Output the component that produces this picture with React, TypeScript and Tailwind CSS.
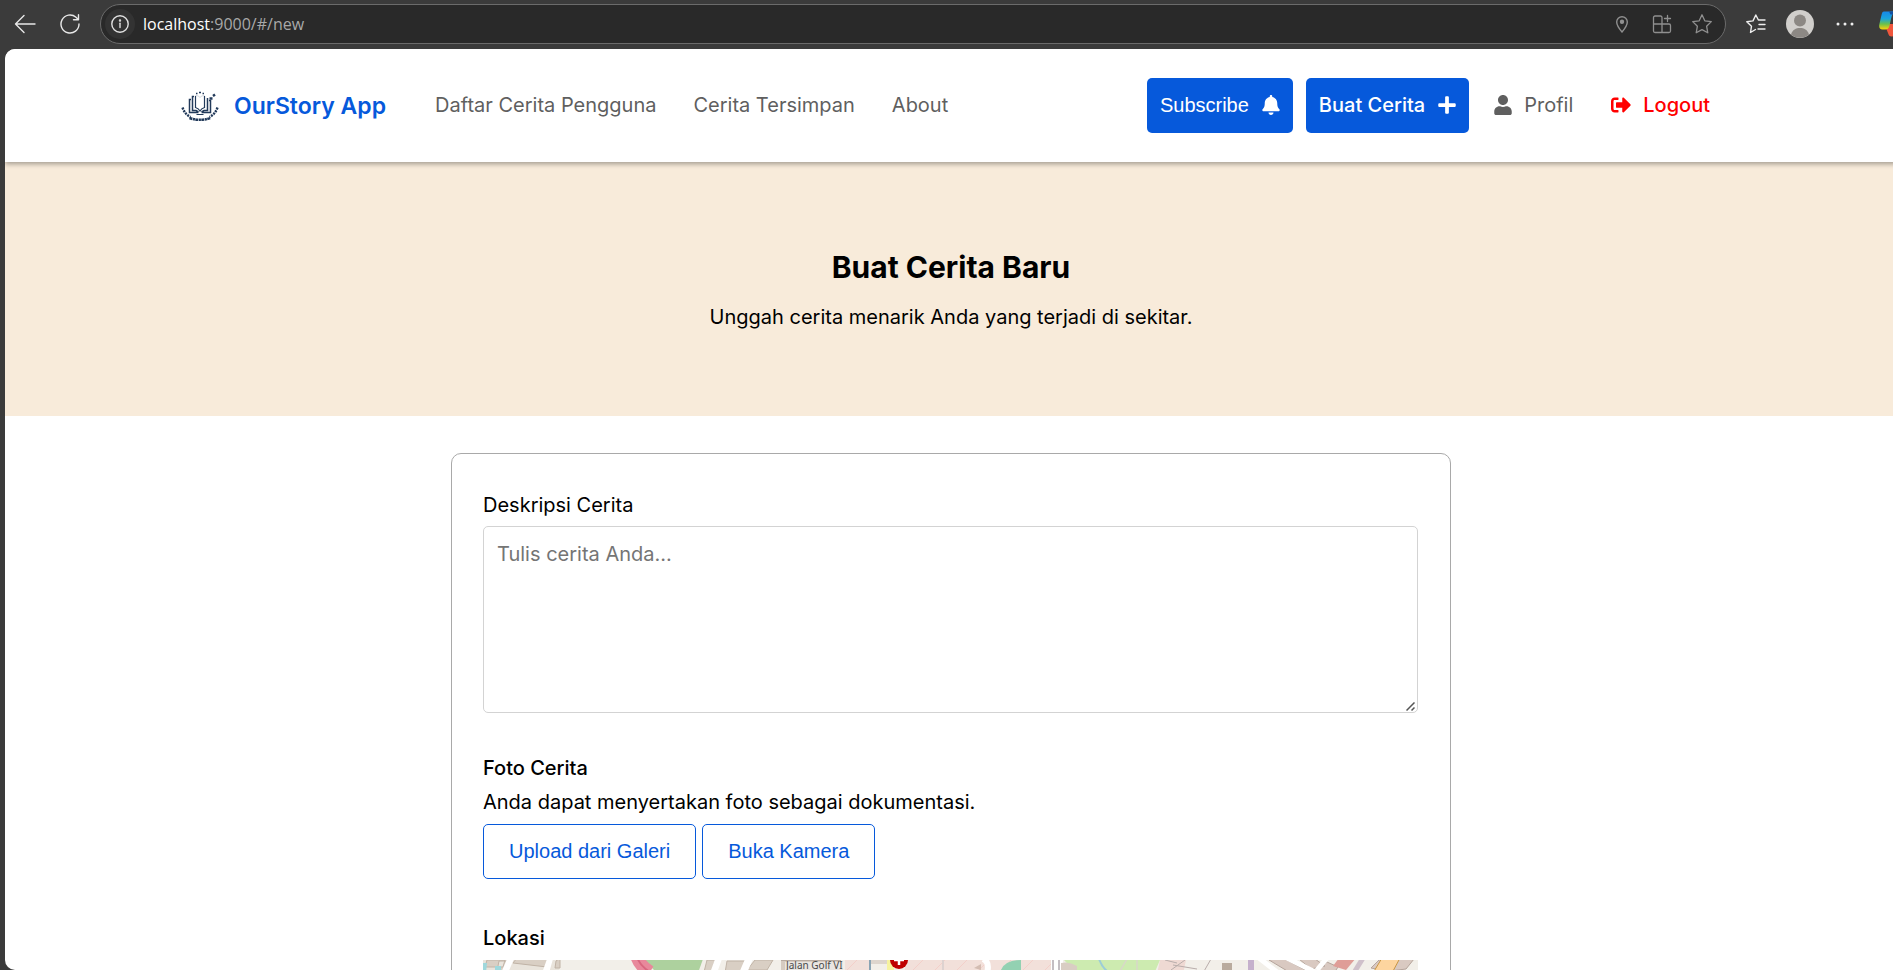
import { FaBell, FaPlus, FaSignOutAlt, FaUser } from 'react-icons/fa';

const tick = 'fill-none stroke-current';

function BrowserBar() {
  return (
    <div className="flex h-[49px] shrink-0 items-center pb-px pl-[14px] font-['Open_Sans','Noto_Sans',sans-serif]">
      <button type="button" aria-label="Back" className="text-[#e8e8e8]">
        <svg width="22" height="20" viewBox="0 0 22 20" className={tick} strokeWidth="1.4" strokeLinecap="round" strokeLinejoin="round">
          <path d="M21 10H1.5M10 1.5 1.5 10l8.500 8.500" />
        </svg>
      </button>
      <button type="button" aria-label="Refresh" className="ml-6 text-[#e8e8e8]">
        <svg width="20" height="20" viewBox="0 0 20 20" className={tick} strokeWidth="1.4" strokeLinecap="round" strokeLinejoin="round">
          <path d="M19 10a9 9 0 1 1-3-6.700L18.300 5.500M18.500.700v5h-5" />
        </svg>
      </button>
      <div className="ml-5 flex h-10 min-w-0 flex-1 items-center rounded-full border border-[#6b6b6b] bg-[#292929] pr-[13px] pl-1">
        <button type="button" aria-label="Site information" className="flex size-[30px] items-center justify-center rounded-full bg-[#333333] text-[#e0e0e0]">
          <svg width="18" height="18" viewBox="0 0 18 18" className={tick} strokeWidth="1.4" strokeLinecap="round">
            <circle cx="9" cy="9" r="8.200" />
            <path d="M9 8.300v4.200" />
            <circle cx="9" cy="5.500" r=".5" />
          </svg>
        </button>
        <span className="ml-2 flex-1 text-base leading-6 text-[#a8a8a8]">
          <span className="text-white">localhost</span>:9000/#/new
        </span>
        <div className="flex items-center gap-5 text-[#8f8f8f]">
          <button type="button" aria-label="Location">
            <svg width="20" height="20" viewBox="0 0 20 20" className={tick} strokeWidth="1.400">
              <path d="M10 18C7 14.500 4.700 11.200 4.700 8a5.300 5.300 0 0 1 10.600 0c0 3.200-2.300 6.500-5.300 10Z" />
              <circle cx="10" cy="7.800" r="1.500" fill="currentColor" />
            </svg>
          </button>
          <button type="button" aria-label="Apps">
            <svg width="20" height="20" viewBox="0 0 20 20" className={tick} strokeWidth="1.3" strokeLinecap="round" strokeLinejoin="round">
              <path d="M10 10V3.500A1.500 1.500 0 0 0 8.500 2H3a1.500 1.500 0 0 0-1.500 1.500v13.500A1.500 1.500 0 0 0 3 18.500h14a1.500 1.500 0 0 0 1.500-1.500v-5.500A1.500 1.500 0 0 0 17 10H1.500M10 10v8.500M15.500 1.500v6M12.500 4.500h6" />
            </svg>
          </button>
          <button type="button" aria-label="Favorite">
            <svg width="20" height="20" viewBox="0 0 20 20" className={tick} strokeWidth="1.3" strokeLinejoin="round">
              <path d="m10 .8 2.800 6 6.500.8-4.700 4.600 1.200 6.600-5.800-3.200-5.800 3.200 1.200-6.600L.7 7.600l6.500-.8Z" />
            </svg>
          </button>
        </div>
      </div>
      <button type="button" aria-label="Favorites" className="ml-5 text-[#eeeeee]">
        <svg width="20" height="20" viewBox="0 0 20 20" className={tick} strokeWidth="1.400" strokeLinecap="round" strokeLinejoin="round">
          <path d="m9.500 15.500-5 3 1-6.300L.8 7.800l6.200-.9L9.800 1l2.600 5H19M13 10.500h6M12 15h7" />
        </svg>
      </button>
      <button type="button" aria-label="Account" className="ml-5">
        <svg width="28" height="28" viewBox="0 0 28 28">
          <circle cx="14" cy="14" r="14" fill="#d1cfcc" />
          <circle cx="14" cy="10.500" r="6" fill="#8c8884" />
          <path d="M5 24.500C6.500 19.500 10 18 14 18s7.500 1.500 9 6.500A14 14 0 0 1 5 24.500Z" fill="#8c8884" />
        </svg>
      </button>
      <button type="button" aria-label="More" className="ml-[22px]">
        <svg width="18" height="4" viewBox="0 0 18 4" fill="#eeeeee">
          <circle cx="2" cy="2" r="1.500" />
          <circle cx="9" cy="2" r="1.500" />
          <circle cx="16" cy="2" r="1.500" />
        </svg>
      </button>
      <button type="button" aria-label="Copilot" className="ml-[25px] w-[14px] overflow-hidden">
        <svg width="28" height="26" viewBox="0 0 28 26">
          <defs>
            <linearGradient id="wing" x1="0" y1="0" x2="0" y2="1">
              <stop offset="0" stopColor="#1688e8" />
              <stop offset=".4" stopColor="#1aa5dc" />
              <stop offset=".7" stopColor="#6cc04a" />
              <stop offset="1" stopColor="#ffd20a" />
            </linearGradient>
          </defs>
          <path d="M8 13h12l-4 9c-1 3-2 3.500-3.500 3.500-2 0-2.700-1-3.300-3L7 17Z" fill="#f0563c" />
          <path d="M5 .5h10c-3 4-3 9-4.500 14-.7 2.500-1.500 4-4 4H3.500C.5 18.500-.3 16 .4 13L2.500 4C3.200 1.500 3.500.5 5 .5Z" fill="url(#wing)" />
          <path d="M10 .5h5c2 0 3 1 3.500 3h-7Z" fill="#1450a0" />
        </svg>
      </button>
    </div>
  );
}

function Logo() {
  return (
    <svg width="40" height="40" viewBox="0 1 40 40" className="fill-none stroke-[#223a5a]" strokeWidth="1.500" aria-hidden="true">
      <path d="M11 14.500H9.500V27.500h9M14 11.500h-1.500V25.500H16l2.500 1.500M29 15.500h1.500V27.500h-9M27.500 13v12.500H24l-2.500 1.500" />
      <path d="M15.500 11V22.500c2 .5 3.500 1.500 4.500 3.500 1-2 2.500-3 4.500-3.500V11" strokeWidth="1.200" />
      <path d="M15.500 10.500c2.500 0 3.500 1 4.500 2 1-1 2-2 4.500-2" strokeWidth=".5" opacity=".4" />
      <path d="M16.500 29.500h7" strokeWidth="1.200" />
      <path d="M2.500 22.500c1.500 4.500 4 7.500 8 9.500M37.500 22.500c-1.500 4.500-4 7.500-8 9.500" strokeWidth="2.400" strokeDasharray="2 1" />
      <path d="M9.500 33c6.500 2.400 14.500 2.400 21 0" strokeWidth="2.600" strokeDasharray="3 .6 2 .4" />
      <path d="M19 7.500h2M16 8.500h1.500M22.500 8.500H24" strokeWidth="1.600" />
      <path d="M29.500 13.500h3M33 11l2-1.500" strokeWidth="2.400" />
    </svg>
  );
}

function Header() {
  return (
    <header className="relative flex h-[113px] shrink-0 items-center bg-white pr-[187px] pl-[175px] text-xl text-[#5f5f5f] shadow-[0_2px_5px_rgba(0,0,0,0.35)]">
      <a href="#/" className="flex items-center gap-[14px] text-[23px] leading-8 font-semibold text-[#0659db]">
        <Logo />
        OurStory App
      </a>
      <nav className="ml-[49px] flex gap-[37px] pb-0.5">
        <a href="#/">Daftar Cerita Pengguna</a>
        <a href="#/saved">Cerita Tersimpan</a>
        <a href="#/about">About</a>
      </nav>
      <div className="ml-auto flex items-center">
        <button type="button" className="flex h-[55px] items-center gap-[13px] rounded-[5px] bg-[#0659db] px-[13px] pb-0.5 font-['Liberation_Sans',Arial,sans-serif] font-medium text-white">
          Subscribe
          <FaBell className="h-5 w-[18px]" />
        </button>
        <a href="#/new" className="ml-[13px] flex h-[55px] items-center gap-[13px] rounded-[5px] bg-[#0659db] px-[13px] pb-0.5 font-medium text-white">
          Buat Cerita
          <FaPlus className="h-5 w-[18px]" />
        </a>
        <a href="#/profile" className="ml-[25px] flex items-center gap-[12px] pb-0.5">
          <FaUser className="h-5 w-[18px]" />
          Profil
        </a>
        <a href="#/logout" className="ml-[38px] flex items-center gap-[12px] pb-0.5 font-medium text-[#ff0000]">
          <FaSignOutAlt className="size-5" />
          Logout
        </a>
      </div>
    </header>
  );
}

function StreetMap() {
  return (
    <svg viewBox="0 0 936 500" preserveAspectRatio="xMinYMin slice" className="mt-[5px] block h-[500px] w-full shrink-0 bg-[#f2efe9]" role="img" aria-label="Peta lokasi">
      <defs>
        <pattern id="hatch" width="22" height="22" patternUnits="userSpaceOnUse">
          <rect width="22" height="22" fill="#f2e0da" />
          <path d="M0 22 22 0" stroke="#f3cfc9" />
        </pattern>
      </defs>
      <rect x="0" width="76" height="500" fill="#e9e4dc" />
      <g fill="#d9cfc4" stroke="#c0b3a6">
        <path d="M4 0h18l-2 7H2ZM24 1h-8l-2 10H20ZM34-2h34L64 7 30 3ZM73 1l4-3v10h-5ZM224 0h8l-3 12h-8ZM244 1h20l-3 12h-19ZM272 0h18l-6 10h-20Z" />
      </g>
      <path d="M0 3h4l-1 10H0ZM12 6h6v5h-6Z" fill="#9fd8dc" />
      <path d="m24-1h7l-6 14h-7ZM64-1h6l-4 14h-7ZM232-1h7l-5 14h-7ZM262-1h8l-6 14h-8Z" fill="#fff" />
      <path d="m160-1h60l-5 14h-41Z" fill="#add19e" />
      <path d="M154-3q3 9 13 15" stroke="#e8889b" strokeWidth="13" fill="none" />
      <path d="M154-3q3 9 13 15" stroke="#d8677f" strokeWidth="2" fill="none" />
      <rect x="298" width="60" height="14" fill="#d6cbc1" />
      <path d="M298 0h60v1h-60Z" fill="#b7aaa0" />
      <rect x="302" y="2" width="58" height="11" fill="#e9e5e1" />
      <text x="303" y="9" className="font-['Noto_Sans',sans-serif] text-[10px]" fill="#4a4a4a">Jalan Golf VI</text>
      <rect x="362" width="26" height="500" fill="url(#hatch)" />
      <path d="M388 0h16v4h-16Z" fill="#ddd5cd" />
      <path d="M387-1v14" stroke="#8aa4b4" strokeWidth="2" />
      <path d="M404 0h7v14h-7Z" fill="#f6f3a0" />
      <rect x="422" width="146" height="500" fill="url(#hatch)" />
      <path d="M460-1v14" stroke="#ddd2d0" strokeWidth="2" />
      <path d="M500-1q7 3 4 14" stroke="#fff" strokeWidth="6" fill="none" />
      <circle cx="416" cy="0" r="9" fill="#bf0000" />
      <path d="M416-6V5M411 0h10" stroke="#fff" strokeWidth="2.500" />
      <path d="m491 8 7-4v6Z" fill="#d4bdb2" />
      <path d="M518 10q4-10 20-10v12h-20Z" fill="#93d1b2" />
      <path d="M568 0h12v14h-12Z" fill="#fff" />
      <path d="M570 0v14M576 0v14" stroke="#b1a9b0" strokeWidth="1.500" />
      <path d="M581 0h96l-6 14h-77Z" fill="#cdebb0" />
      <path d="M616-1q3 8 8 12" stroke="#9ccdd8" strokeWidth="2" fill="none" />
      <path d="M654-1v12M644-1l-7 12" stroke="#d8d8c8" strokeWidth="1.500" />
      <path d="M578 3q8-2 16 3v8h-16Z" fill="#d9cdc3" />
      <path d="M677 0h26l-3 14h-26Z" fill="#efd9d3" />
      <path d="m682 0 12 3M690 5l24 4M702 0l-14 10M728-1l-8 14" stroke="#b9adab" strokeWidth="1" />
      <path d="M739 3h10v8h-10Z" fill="#b9ab9e" />
      <path d="M765-1h6v14h-6Z" fill="#c5b0cc" />
      <g fill="#d9c9c1" stroke="#b5a49b">
        <path d="m786 0 14-2 26 14h-20ZM816-1h16l10 7-14 3ZM834 10l10-8 11 5-4 6ZM888 8l8-8h14l-6 11ZM911-1h20l-8 10-16 2Z" />
      </g>
      <path d="m776-2 18 14M804-2l28 14M844-2l-10 12" stroke="#fff" strokeWidth="5" />
      <path d="m850 6 6-8h17l-10 12Z" fill="#df9d97" />
      <path d="m880-2-8 13" stroke="#cfc0ca" strokeWidth="5" />
      <path d="m899-2h18l-8 15h-19Z" fill="#fdd59f" stroke="#c99745" />
    </svg>
  );
}

const outline =
  "h-[55px] rounded-[5px] border border-[#0659db] px-[25px] pb-0.5 font-['Liberation_Sans',Arial,sans-serif] text-xl text-[#0659db]";

export default function App() {
  return (
    <div className="flex h-screen flex-col overflow-hidden bg-[#3b3b3b]">
      <BrowserBar />
      <div className="-mr-1 ml-[5px] flex min-h-0 flex-1 flex-col overflow-hidden rounded-l-[10px] bg-white font-['Inter',sans-serif] text-xl text-black">
        <Header />
        <main className="min-h-0 flex-1">
          <section className="bg-[#f8ebda] py-20 text-center">
            <h1 className="text-3xl leading-[50px] font-bold">Buat Cerita Baru</h1>
            <p className="mt-[7px] leading-[37px]">Unggah cerita menarik Anda yang terjadi di sekitar.</p>
          </section>
          <form className="mx-auto mt-[37px] w-full max-w-[1000px] rounded-[10px] border border-[#a9a9a9] pt-[34px] pr-8 pb-8 pl-[31px]">
            <div className="flex flex-col gap-[3px]">
              <label htmlFor="description" className="leading-[35px]">Deskripsi Cerita</label>
              <div className="relative">
                <textarea
                  id="description"
                  placeholder="Tulis cerita Anda..."
                  className="block h-[187px] w-full resize-none rounded-[5px] border border-[#d3d3d3] px-[13px] py-[11px] leading-8 placeholder:text-[#757575]"
                />
                <svg width="9" height="9" viewBox="0 0 9 9" className="pointer-events-none absolute right-[3px] bottom-0.5 fill-none stroke-[#555555]" strokeWidth="1.500" aria-hidden="true">
                  <path d="M.5 8.500 8.500.500M5.500 8.500l3-3" />
                </svg>
              </div>
            </div>
            <fieldset className="mt-[38px]">
              <legend className="leading-[34px] font-medium">Foto Cerita</legend>
              <p className="leading-[34px]">Anda dapat menyertakan foto sebagai dokumentasi.</p>
              <div className="mt-[5px] flex gap-[6px]">
                <button type="button" className={outline}>Upload dari Galeri</button>
                <button type="button" className={outline}>Buka Kamera</button>
              </div>
            </fieldset>
            <fieldset className="mt-[42px]">
              <legend className="leading-[34px] font-medium">Lokasi</legend>
              <StreetMap />
            </fieldset>
          </form>
        </main>
      </div>
    </div>
  );
}
